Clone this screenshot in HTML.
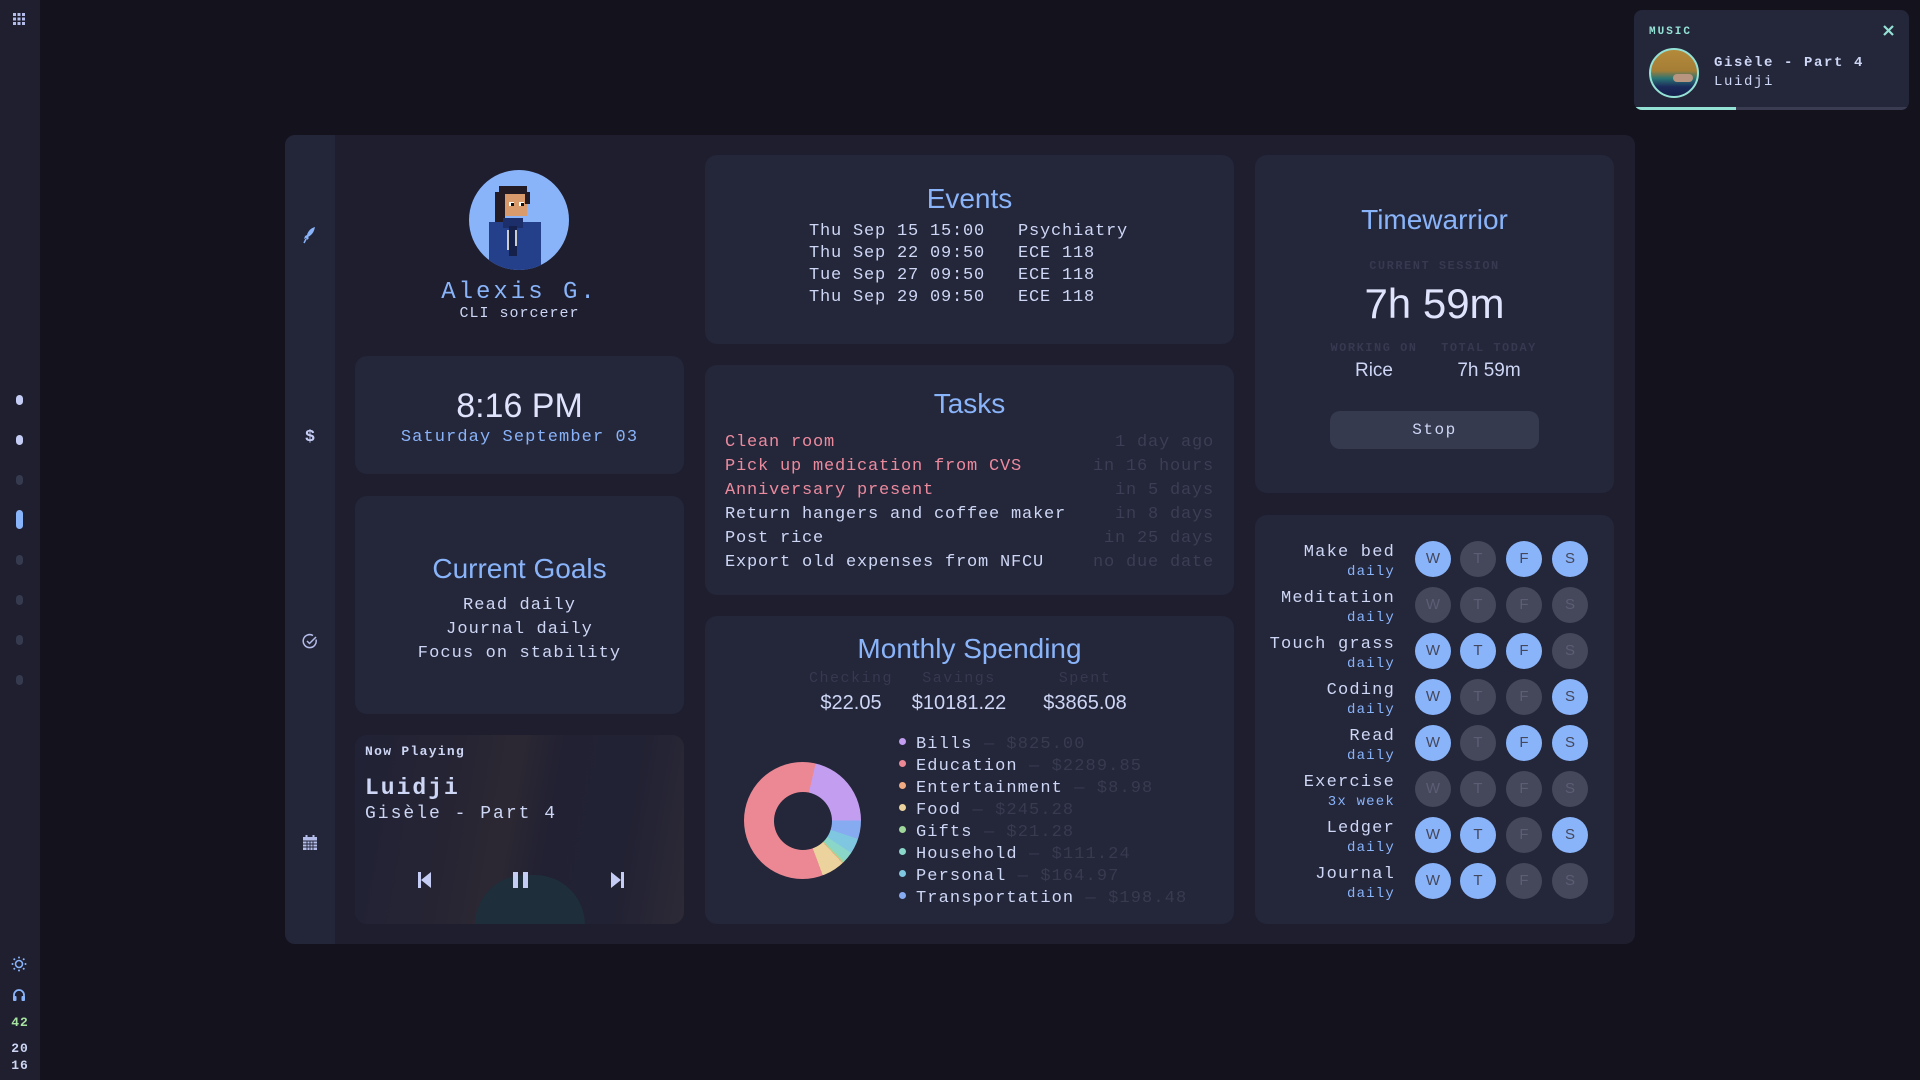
<!DOCTYPE html>
<html><head><meta charset="utf-8"><style>
*{margin:0;padding:0;box-sizing:border-box}
body{width:1920px;height:1080px;background:#13121d;position:relative;overflow:hidden;font-family:"Liberation Mono",monospace;color:#cdd6f4}
.a{position:absolute}
.card{position:absolute;background:#24263a;border-radius:12px}
.sans{font-family:"Liberation Sans",sans-serif}
.title{position:absolute;left:0;right:0;text-align:center;font-family:"Liberation Sans",sans-serif;color:#89b4fa;font-size:28px;font-weight:300}
.c{text-align:center;left:0;right:0}
.dot{position:absolute;left:16px;width:7px;border-radius:4px;background:#363a4f;height:12px}
.hrow{position:absolute;left:0;width:360px;height:46px}
.hn{position:absolute;right:220px;top:-16px;text-align:right;font-size:17px;letter-spacing:1.2px;white-space:nowrap}
.hf{position:absolute;right:220px;top:5px;text-align:right;font-size:14px;letter-spacing:1.2px;color:#89b4fa;white-space:nowrap}
.ci{position:absolute;top:-18px;width:36px;height:36px;border-radius:50%;background:#45475a;color:#5b5e75;font-family:"Liberation Sans",sans-serif;font-size:15px;text-align:center;line-height:36px}
.ci.on{background:#89b4fa;color:#45475a}
.task{position:absolute;left:20px;right:20px;height:24px;font-size:17px;letter-spacing:0.8px;white-space:pre}
.task span{position:absolute;right:0;color:#3b3e54}
.red{color:#ec8a9e}
.leg{position:absolute;left:0;font-size:17px;letter-spacing:1.1px;white-space:pre}
.leg i{display:inline-block;width:7px;height:7px;border-radius:50%;margin-right:10px;vertical-align:3px}
.leg span{color:#383b50}
.lbl{position:absolute;font-size:12px;font-weight:bold;letter-spacing:1.5px;color:#363950;text-align:center}
</style></head><body>

<div class="a" style="left:0;top:0;width:40px;height:1080px;background:#1f1f2f"></div>
<svg class="a" style="left:13px;top:13px" width="12" height="12"><g fill="#b4bcea"><rect x="0" y="0" width="3" height="3"/><rect x="4.5" y="0" width="3" height="3"/><rect x="9" y="0" width="3" height="3"/><rect x="0" y="4.5" width="3" height="3"/><rect x="4.5" y="4.5" width="3" height="3"/><rect x="9" y="4.5" width="3" height="3"/><rect x="0" y="9" width="3" height="3"/><rect x="4.5" y="9" width="3" height="3"/><rect x="9" y="9" width="3" height="3"/></g></svg>
<div class="dot" style="top:395px;background:#c6cdf5;height:10px"></div>
<div class="dot" style="top:435px;background:#c6cdf5;height:10px"></div>
<div class="dot" style="top:475px;height:10px"></div>
<div class="dot" style="top:510px;background:#89b4fa;height:19px"></div>
<div class="dot" style="top:555px;height:10px"></div>
<div class="dot" style="top:595px;height:10px"></div>
<div class="dot" style="top:635px;height:10px"></div>
<div class="dot" style="top:675px;height:10px"></div>
<svg class="a" style="left:11px;top:956px" width="16" height="16" viewBox="0 0 16 16"><circle cx="8" cy="8" r="3.5" fill="none" stroke="#89b4fa" stroke-width="1.6"/><g fill="#89b4fa"><circle cx="8" cy="1.5" r="1"/><circle cx="8" cy="14.5" r="1"/><circle cx="1.5" cy="8" r="1"/><circle cx="14.5" cy="8" r="1"/><circle cx="3.3" cy="3.3" r="1"/><circle cx="12.7" cy="3.3" r="1"/><circle cx="3.3" cy="12.7" r="1"/><circle cx="12.7" cy="12.7" r="1"/></g></svg>
<svg class="a" style="left:12px;top:988px" width="14" height="14" viewBox="0 0 14 14"><path d="M2 9V7a5 5 0 0 1 10 0v2" fill="none" stroke="#89b4fa" stroke-width="1.8"/><rect x="1" y="8" width="3.5" height="5" rx="1" fill="#89b4fa"/><rect x="9.5" y="8" width="3.5" height="5" rx="1" fill="#89b4fa"/></svg>
<div class="a" style="left:0;width:40px;top:1015px;text-align:center;font-size:13px;font-weight:bold;color:#a6e3a1;letter-spacing:1px">42</div>
<div class="a" style="left:0;width:40px;top:1040px;text-align:center;font-size:13px;font-weight:bold;color:#cdd6f4;letter-spacing:1px;line-height:17px">20<br>16</div>

<div class="a" style="left:285px;top:135px;width:1350px;height:809px;background:#1e1e2e;border-radius:10px;overflow:hidden">
  <div class="a" style="left:0;top:0;width:50px;height:809px;background:#232538"></div>
</div>
<svg class="a" style="left:302px;top:226px" width="16" height="18" viewBox="0 0 16 18"><path d="M13 1 C9 2 6 5 5 9 L3 10 L2 13 L4 12 L5 14 L7 12 L6 11 C10 9 12 6 13 1Z" fill="#89b4fa"/><path d="M4 13 L2 17" stroke="#89b4fa" stroke-width="1.5"/></svg>
<div class="a" style="left:300px;top:428px;width:20px;text-align:center;font-size:17px;font-weight:bold;color:#c6cdf5">$</div>
<svg class="a" style="left:302px;top:633px" width="16" height="16" viewBox="0 0 16 16"><path d="M14 6.5A6.5 6.5 0 1 1 11 2.5" fill="none" stroke="#b4bcea" stroke-width="1.5"/><path d="M5 8l2.5 2.5L14 4" fill="none" stroke="#b4bcea" stroke-width="1.5"/></svg>
<svg class="a" style="left:302px;top:834px" width="16" height="17" viewBox="0 0 16 17"><rect x="1" y="3" width="14" height="13" fill="#b4bcea"/><g stroke="#232538" stroke-width="0.9"><path d="M1 7h14M1 10h14M1 13h14M5 7v9M8 7v9M11 7v9"/></g><rect x="3.5" y="1" width="2" height="4" fill="#b4bcea"/><rect x="10.5" y="1" width="2" height="4" fill="#b4bcea"/></svg>

<svg class="a" style="left:469px;top:170px" width="100" height="100" viewBox="0 0 100 100">
<defs><clipPath id="cp"><circle cx="50" cy="50" r="50"/></clipPath></defs>
<circle cx="50" cy="50" r="50" fill="#89b4fa"/>
<g clip-path="url(#cp)">
<rect x="30" y="16" width="28" height="14" fill="#241c24"/>
<rect x="26" y="22" width="10" height="36" fill="#241c24"/>
<rect x="36" y="24" width="22" height="22" fill="#d99a6c"/>
<rect x="40" y="32" width="5" height="4" fill="#fff"/><rect x="50" y="32" width="5" height="4" fill="#fff"/>
<rect x="42" y="33" width="3" height="3" fill="#111"/><rect x="52" y="33" width="3" height="3" fill="#111"/>
<rect x="56" y="22" width="5" height="12" fill="#241c24"/>
<rect x="20" y="52" width="52" height="48" fill="#25408a"/>
<rect x="34" y="48" width="20" height="10" fill="#1d2f6a"/>
<rect x="40" y="56" width="8" height="30" fill="#15214a"/>
<rect x="38" y="60" width="2" height="20" fill="#ccc"/><rect x="46" y="60" width="2" height="16" fill="#ccc"/>
</g></svg>
<div class="a c" style="left:355px;width:329px;top:279px;font-size:24px;letter-spacing:3px;color:#89b4fa">Alexis G.</div>
<div class="a c" style="left:355px;width:329px;top:305px;font-size:15px;letter-spacing:1px">CLI sorcerer</div>

<div class="card" style="left:355px;top:356px;width:329px;height:118px">
  <div class="a c sans" style="top:31px;font-size:34px;color:#dfe3fb">8:16 PM</div>
  <div class="a c" style="top:72px;font-size:17px;letter-spacing:1.1px;color:#89b4fa">Saturday September 03</div>
</div>

<div class="card" style="left:355px;top:496px;width:329px;height:218px">
  <div class="title" style="top:57px">Current Goals</div>
  <div class="a c" style="top:98px;font-size:17px;letter-spacing:1.1px;line-height:24px">Read daily<br>Journal daily<br>Focus on stability</div>
</div>

<div class="card" style="left:355px;top:735px;width:329px;height:189px;overflow:hidden;background:linear-gradient(100deg,#23243a 0%,#2a2836 30%,#332d36 46%,#232335 58%,#232436 80%,#35303a 100%)">
  <div class="a" style="left:120px;top:140px;width:110px;height:60px;background:#1f3540;border-radius:50px 50px 0 0"></div>
  <div class="a" style="left:0;top:0;right:0;bottom:0;background:rgba(30,30,46,0.3)"></div>
  <div class="a" style="left:10px;top:9px;font-size:13px;font-weight:bold;letter-spacing:1.3px">Now Playing</div>
  <div class="a" style="left:10px;top:40px;font-size:23px;font-weight:bold;letter-spacing:2px">Luidji</div>
  <div class="a" style="left:10px;top:69px;font-size:18px;letter-spacing:2px">Gisèle - Part 4</div>
  <svg class="a" style="left:63px;top:136px" width="14" height="18"><rect x="0" y="1" width="3" height="16" fill="#c6cdf5"/><path d="M13 1V17L3 9Z" fill="#c6cdf5"/></svg>
  <svg class="a" style="left:157px;top:136px" width="18" height="18"><rect x="1" y="1" width="5" height="16" fill="#c6cdf5"/><rect x="11" y="1" width="5" height="16" fill="#c6cdf5"/></svg>
  <svg class="a" style="left:255px;top:136px" width="14" height="18"><path d="M1 1V17L11 9Z" fill="#c6cdf5"/><rect x="11" y="1" width="3" height="16" fill="#c6cdf5"/></svg>
</div>

<div class="card" style="left:705px;top:155px;width:529px;height:189px">
  <div class="title" style="top:28px">Events</div>
  <div class="a" style="left:104px;top:66px;font-size:17px;letter-spacing:0.8px;line-height:22px;white-space:pre">Thu Sep 15 15:00   Psychiatry
Thu Sep 22 09:50   ECE 118
Tue Sep 27 09:50   ECE 118
Thu Sep 29 09:50   ECE 118</div>
</div>

<div class="card" style="left:705px;top:365px;width:529px;height:230px">
  <div class="title" style="top:23px">Tasks</div>
  <div class="task red" style="top:68px">Clean room<span>1 day ago</span></div>
  <div class="task red" style="top:92px">Pick up medication from CVS<span>in 16 hours</span></div>
  <div class="task red" style="top:116px">Anniversary present<span>in 5 days</span></div>
  <div class="task" style="top:140px">Return hangers and coffee maker<span>in 8 days</span></div>
  <div class="task" style="top:164px">Post rice<span>in 25 days</span></div>
  <div class="task" style="top:188px">Export old expenses from NFCU<span>no due date</span></div>
</div>

<div class="card" style="left:705px;top:616px;width:529px;height:308px">
  <div class="title" style="top:17px">Monthly Spending</div>
  <div class="lbl" style="left:96px;width:100px;top:54px;font-weight:normal;font-size:15px">Checking</div>
  <div class="lbl" style="left:204px;width:100px;top:54px;font-weight:normal;font-size:15px">Savings</div>
  <div class="lbl" style="left:330px;width:100px;top:54px;font-weight:normal;font-size:15px">Spent</div>
  <div class="a sans" style="left:96px;width:100px;top:76px;text-align:center;font-size:20px">$22.05</div>
  <div class="a sans" style="left:194px;width:120px;top:76px;text-align:center;font-size:20px">$10181.22</div>
  <div class="a sans" style="left:320px;width:120px;top:76px;text-align:center;font-size:20px">$3865.08</div>
  <div class="a" style="left:39px;top:146px;width:117px;height:117px;border-radius:50%;background:conic-gradient(from 13deg,#c39ef0 0 76.8deg,#86abf0 76.8deg 95.3deg,#7fc6e0 95.3deg 110.7deg,#8ad6c8 110.7deg 121.1deg,#9fd69a 121.1deg 123.1deg,#f0ab82 123.1deg 123.9deg,#ecd29c 123.9deg 146.7deg,#eb8893 146.7deg 360deg)"></div>
  <div class="a" style="left:68.5px;top:175.5px;width:58px;height:58px;border-radius:50%;background:#24263a"></div>
  <div class="a" style="left:194px;top:119px">
    <div class="leg" style="top:0"><i style="background:#c39ef0"></i>Bills <span>— $825.00</span></div>
    <div class="leg" style="top:22px"><i style="background:#eb8893"></i>Education <span>— $2289.85</span></div>
    <div class="leg" style="top:44px"><i style="background:#f0ab82"></i>Entertainment <span>— $8.98</span></div>
    <div class="leg" style="top:66px"><i style="background:#ecd29c"></i>Food <span>— $245.28</span></div>
    <div class="leg" style="top:88px"><i style="background:#9fd69a"></i>Gifts <span>— $21.28</span></div>
    <div class="leg" style="top:110px"><i style="background:#8ad6c8"></i>Household <span>— $111.24</span></div>
    <div class="leg" style="top:132px"><i style="background:#7fc6e0"></i>Personal <span>— $164.97</span></div>
    <div class="leg" style="top:154px"><i style="background:#86abf0"></i>Transportation <span>— $198.48</span></div>
  </div>
</div>

<div class="card" style="left:1255px;top:155px;width:359px;height:338px">
  <div class="title" style="top:49px">Timewarrior</div>
  <div class="lbl" style="left:0;right:0;top:104px">CURRENT SESSION</div>
  <div class="a c sans" style="top:125px;font-size:42px;color:#dfe3fb">7h 59m</div>
  <div class="lbl" style="left:74px;width:90px;top:186px">WORKING ON</div>
  <div class="lbl" style="left:184px;width:100px;top:186px">TOTAL TODAY</div>
  <div class="a sans" style="left:74px;width:90px;top:205px;text-align:center;font-size:19px">Rice</div>
  <div class="a sans" style="left:184px;width:100px;top:205px;text-align:center;font-size:19px">7h 59m</div>
  <div class="a" style="left:75px;top:256px;width:209px;height:38px;background:#363a4f;border-radius:10px;text-align:center;line-height:38px;font-size:16px;letter-spacing:1.5px">Stop</div>
</div>

<div class="card" style="left:1255px;top:515px;width:359px;height:409px">
  <div class="a" style="left:0;top:44px;width:359px">
    <div class="hrow" style="top:0"><div class="hn">Make bed</div><div class="hf">daily</div><div class="ci on" style="left:160px">W</div><div class="ci" style="left:205px">T</div><div class="ci on" style="left:251px">F</div><div class="ci on" style="left:297px">S</div></div>
    <div class="hrow" style="top:46px"><div class="hn">Meditation</div><div class="hf">daily</div><div class="ci" style="left:160px">W</div><div class="ci" style="left:205px">T</div><div class="ci" style="left:251px">F</div><div class="ci" style="left:297px">S</div></div>
    <div class="hrow" style="top:92px"><div class="hn">Touch grass</div><div class="hf">daily</div><div class="ci on" style="left:160px">W</div><div class="ci on" style="left:205px">T</div><div class="ci on" style="left:251px">F</div><div class="ci" style="left:297px">S</div></div>
    <div class="hrow" style="top:138px"><div class="hn">Coding</div><div class="hf">daily</div><div class="ci on" style="left:160px">W</div><div class="ci" style="left:205px">T</div><div class="ci" style="left:251px">F</div><div class="ci on" style="left:297px">S</div></div>
    <div class="hrow" style="top:184px"><div class="hn">Read</div><div class="hf">daily</div><div class="ci on" style="left:160px">W</div><div class="ci" style="left:205px">T</div><div class="ci on" style="left:251px">F</div><div class="ci on" style="left:297px">S</div></div>
    <div class="hrow" style="top:230px"><div class="hn">Exercise</div><div class="hf">3x week</div><div class="ci" style="left:160px">W</div><div class="ci" style="left:205px">T</div><div class="ci" style="left:251px">F</div><div class="ci" style="left:297px">S</div></div>
    <div class="hrow" style="top:276px"><div class="hn">Ledger</div><div class="hf">daily</div><div class="ci on" style="left:160px">W</div><div class="ci on" style="left:205px">T</div><div class="ci" style="left:251px">F</div><div class="ci on" style="left:297px">S</div></div>
    <div class="hrow" style="top:322px"><div class="hn">Journal</div><div class="hf">daily</div><div class="ci on" style="left:160px">W</div><div class="ci on" style="left:205px">T</div><div class="ci" style="left:251px">F</div><div class="ci" style="left:297px">S</div></div>
  </div>
</div>

<div class="a" style="left:1634px;top:10px;width:275px;height:100px;background:#24263a;border-radius:8px;overflow:hidden">
  <div class="a" style="left:15px;top:16px;font-size:11px;font-weight:bold;letter-spacing:2px;color:#94e2d5">MUSIC</div>
  <svg class="a" style="left:249px;top:15px" width="11" height="11"><path d="M1 1L10 10M10 1L1 10" stroke="#94e2d5" stroke-width="2.2"/></svg>
  <div class="a" style="left:15px;top:38px;width:50px;height:50px;border-radius:50%;border:2px solid #94e2d5;overflow:hidden;background:linear-gradient(180deg,#b48a3a 0%,#a57e36 45%,#2a7474 62%,#1b2a5a 80%,#15204a 100%)">
    <div class="a" style="left:22px;top:24px;width:20px;height:8px;background:#b89580;border-radius:4px"></div>
  </div>
  <div class="a" style="left:80px;top:45px;font-size:14px;font-weight:bold;letter-spacing:1.6px">Gisèle - Part 4</div>
  <div class="a" style="left:80px;top:64px;font-size:14px;letter-spacing:1.6px">Luidji</div>
  <div class="a" style="left:0;top:97px;width:275px;height:3px;background:#3a3d52"></div>
  <div class="a" style="left:0;top:97px;width:102px;height:3px;background:#94e2d5"></div>
</div>
</body></html>
